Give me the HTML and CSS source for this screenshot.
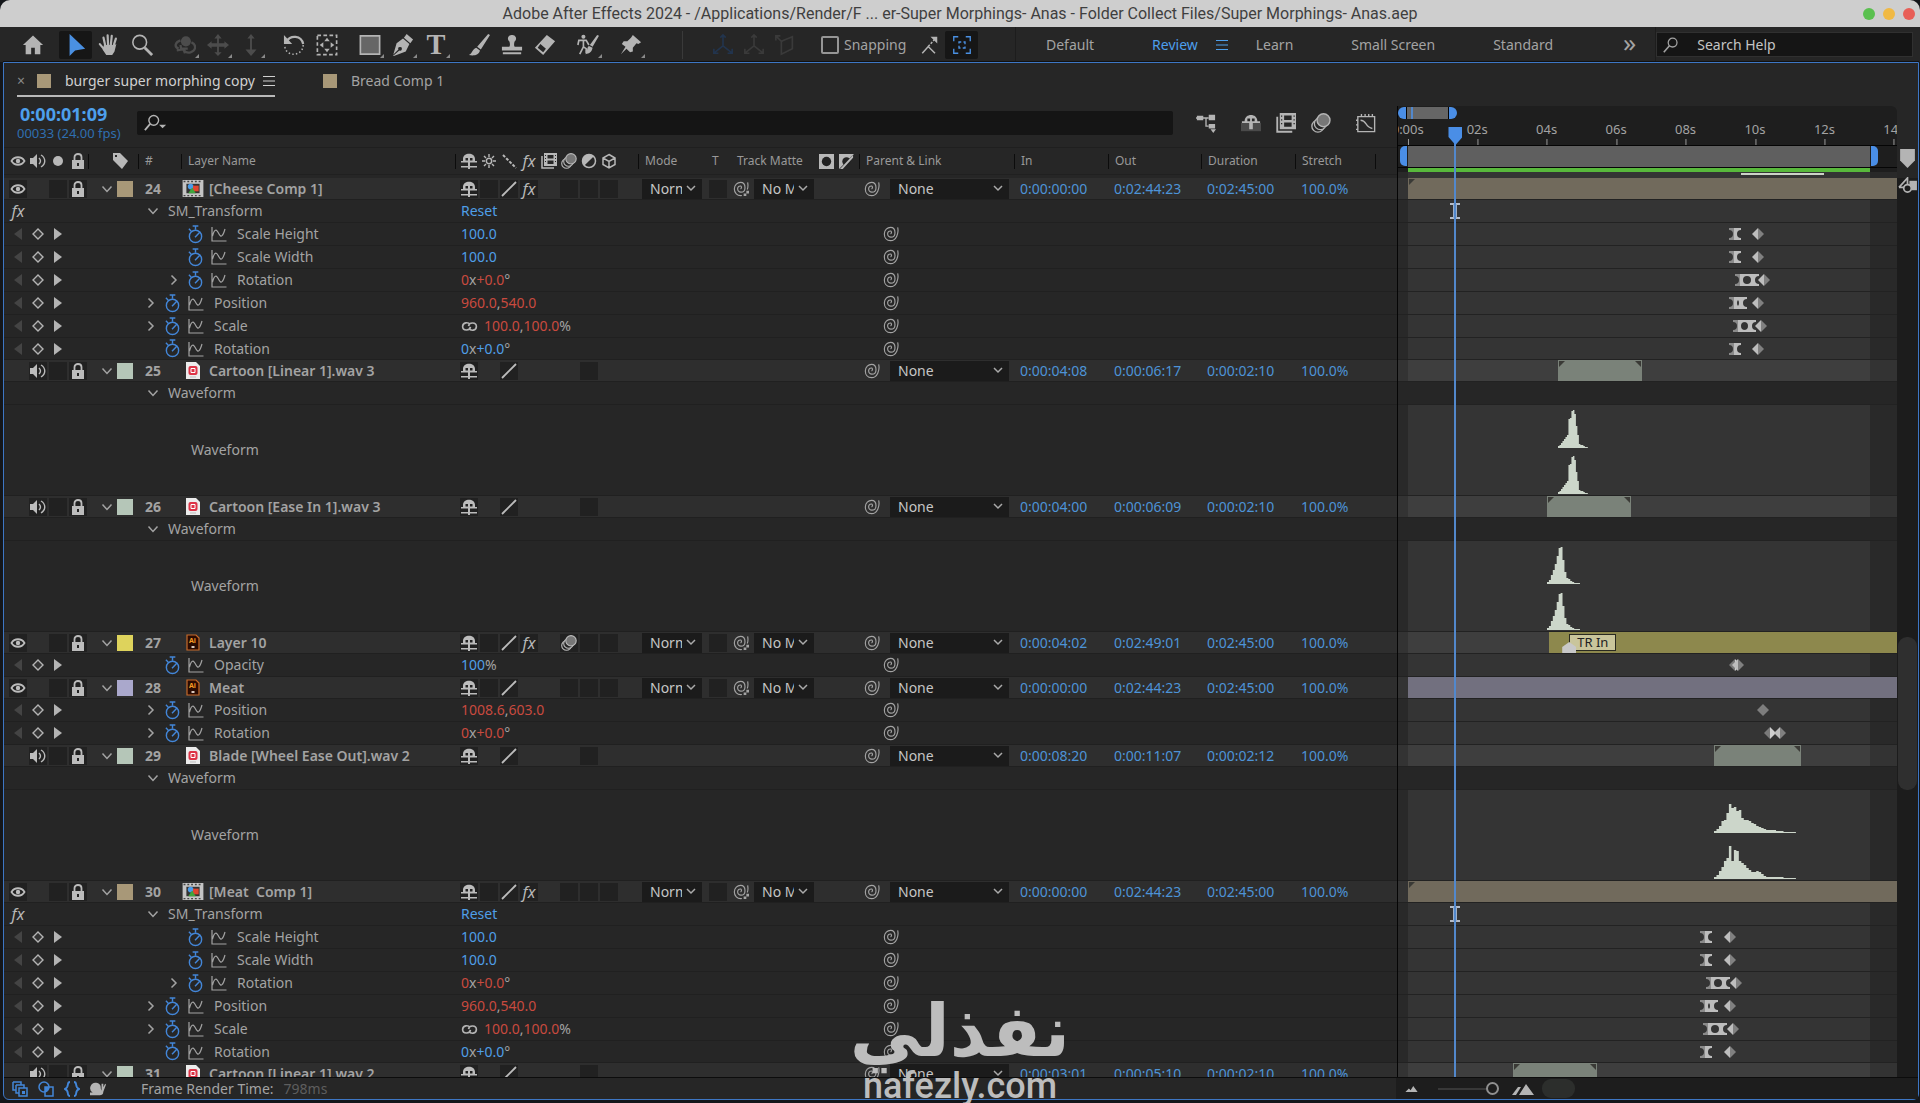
FILE: index.html
```html
<!DOCTYPE html>
<html lang="en">
<head>
  <meta charset="UTF-8">
  <title>Adobe After Effects 2024</title>
  <link rel="stylesheet" href="styles.css">
</head>
<body>
  <svg class="sprite" xmlns="http://www.w3.org/2000/svg">
    <symbol id="home" viewBox="0 0 24 24"><path fill="currentColor" d="M12 1.500L1 12h3v10h6v-7h4v7h6V12h3z"/></symbol>
    <symbol id="arrow" viewBox="0 0 24 24"><path fill="currentColor" d="M5 0v24l6-6 11-2z"/></symbol>
    <symbol id="hand" viewBox="0 0 24 24"><path fill="none" stroke="currentColor" stroke-width="2.400" stroke-linecap="round" d="M8 13L6 4M11 12l-.5-10.500M14 12l1-10M17 13l2.500-8M7 17l-5-6"/><path fill="currentColor" d="M6.500 12h11.500l2-1-2 8-2.500 4H9l-4-6z"/></symbol>
    <symbol id="zoom" viewBox="0 0 24 24"><circle cx="9.500" cy="9" r="7.500" fill="none" stroke="currentColor" stroke-width="1.700"/><path stroke="currentColor" stroke-width="3" d="M15 15l8 8"/></symbol>
    <symbol id="orbit" viewBox="0 0 24 24"><circle cx="13" cy="8" r="5.500" fill="currentColor"/><path fill="none" stroke="currentColor" stroke-width="2.500" d="M7 7c-6 2-7 7-2 9M19 9c6 3 5 9-1 11-4 1-7-1-7-3M3 18l5-1-1-5M15 16l-5 0 2 5"/></symbol>
    <symbol id="pan" viewBox="0 0 24 24"><path fill="currentColor" d="M12 0l4 5h-3v5h6V8l5 4-5 4v-2h-6v6h3l-4 4-4-4h3v-6H5v2l-5-4 5-4v2h6V5H8z"/></symbol>
    <symbol id="dolly" viewBox="0 0 24 24"><path fill="currentColor" d="M12 0l4 5h-3v12h5l-6 7-6-7h5V5H8z"/></symbol>
    <symbol id="rotate" viewBox="0 0 24 24"><path fill="none" stroke="currentColor" stroke-width="2.400" d="M4 8C8 1 20 1 22 11"/><path fill="currentColor" d="M1 1v10h9z"/><path fill="none" stroke="currentColor" stroke-width="1.600" stroke-dasharray="1.600 2.400" d="M22 12c0 12-18 14-20 2"/></symbol>
    <symbol id="anchor" viewBox="0 0 24 24"><path fill="none" stroke="currentColor" stroke-width="1.800" stroke-dasharray="4 2.600" d="M1.500 1.500h21v21h-21z"/><path fill="currentColor" d="M12 4l3 4H9zM12 20l-3-4h6zM4 12l4-3v6zM20 12l-4 3V9z"/></symbol>
    <symbol id="rect" viewBox="0 0 24 24"><path fill="#666" stroke="currentColor" stroke-width="1.800" d="M1.500 2h21v20h-21z"/></symbol>
    <symbol id="pen" viewBox="0 0 24 24"><path fill="currentColor" fill-rule="evenodd" d="M16 0l7 6-3 4-7-6zM12 5l7 6-4 8-13 5-1-1 6-6a2 2 0 1 1 1 1l-7 6 4-14z"/></symbol>
    <symbol id="type" viewBox="0 0 24 24"><text x="12" y="22" text-anchor="middle" font-family="Liberation Serif" font-weight="700" font-size="31" fill="currentColor">T</text></symbol>
    <symbol id="brush" viewBox="0 0 24 24"><path fill="currentColor" d="M22 0l2 1-10 16-4-3zM9 15l4 3c-1 5-6 6-12 5 4-2 3-6 8-8z"/></symbol>
    <symbol id="stamp" viewBox="0 0 24 24"><path fill="currentColor" d="M12 1a4 4 0 0 1 3 7c-1 2-1 5 0 6h8v4H1v-4h8c1-1 1-4 0-6a4 4 0 0 1 3-7zM2 20h20v2H2z"/></symbol>
    <symbol id="eraser" viewBox="0 0 24 24"><path fill="currentColor" d="M14 1l9 7-13 15-9-8zM4 15l6 5 3-4-6-5z" fill-rule="evenodd"/></symbol>
    <symbol id="roto" viewBox="0 0 24 24"><circle cx="7" cy="3" r="2.200" fill="currentColor"/><path fill="none" stroke="currentColor" stroke-width="1.800" d="M1 12l1-5h8l3 5M7 6v8l-4 8M7 14l3 2v5"/><path fill="currentColor" d="M22 1l2 1-7 12-3-2zM13 13l4 2c-1 5-3 6-8 7 3-3 1-7 4-9z"/></symbol>
    <symbol id="pin" viewBox="0 0 24 24"><path fill="currentColor" d="M14 1l9 8-3 2-2-1-4 5v4l-3 1-4-4-6 6 5-8-4-3 2-3h4l4-4z"/></symbol>
    <symbol id="axis" viewBox="0 0 24 24"><path fill="none" stroke="currentColor" stroke-width="1.800" d="M12 2v11l-9 7M12 13l9 7M9 4l3-3 3 3M2 16v5h5M22 16v5h-5"/></symbol>
    <symbol id="plane" viewBox="0 0 24 24"><path fill="none" stroke="currentColor" stroke-width="1.800" d="M8 8l12-5v13L8 22zM2 2l7 7M2 7V2h5"/></symbol>
    <symbol id="snap" viewBox="0 0 24 24"><path fill="none" stroke="currentColor" stroke-width="2" d="M3 23l8-9 9 9"/><path stroke="currentColor" stroke-width="2" stroke-dasharray="3 2" d="M11 14l8-9"/><path fill="currentColor" d="M14 1h9v9z"/></symbol>
    <symbol id="bounds" viewBox="0 0 24 24"><path fill="none" stroke="currentColor" stroke-width="1.800" d="M1 7V1h6M17 1h6v6M23 17v6h-6M7 23H1v-6M8 10V8h3M14 8h2v3M16 14v2h-3M10 16H8v-3"/></symbol>
    <symbol id="menu" viewBox="0 0 12 12"><path stroke="currentColor" stroke-width="1.200" d="M0 1.500h12M0 6h12M0 10.500h12"/></symbol>
    <symbol id="search" viewBox="0 0 20 20"><circle cx="12" cy="7" r="5.500" fill="none" stroke="currentColor" stroke-width="1.600"/><path stroke="currentColor" stroke-width="2" d="M8 11l-7 8"/></symbol>
    <symbol id="searchdrop" viewBox="0 0 26 20"><circle cx="11" cy="7" r="5.500" fill="none" stroke="currentColor" stroke-width="1.600"/><path stroke="currentColor" stroke-width="2" d="M7 11l-6 7"/><path fill="currentColor" d="M17 12h8l-4 4z"/></symbol>
    <symbol id="eye" viewBox="0 0 16 16"><path fill="none" stroke="currentColor" stroke-width="1.800" d="M1.500 8c3-5 10-5 13 0-3 5-10 5-13 0z"/><circle cx="8" cy="8" r="2.200" fill="currentColor"/></symbol>
    <symbol id="speaker" viewBox="0 0 16 16"><path fill="currentColor" d="M0 5h3l4-4v14l-4-4H0z"/><path fill="none" stroke="currentColor" stroke-width="1.400" d="M9 5c2 2 2 4 0 6M11 2c5 3 5 9 0 12"/></symbol>
    <symbol id="dot" viewBox="0 0 16 16"><circle cx="8" cy="8" r="5" fill="currentColor"/></symbol>
    <symbol id="lock" viewBox="0 0 16 16"><path fill="currentColor" fill-rule="evenodd" d="M2 7h12v9H2zM7 10h2v3H7z"/><path fill="none" stroke="currentColor" stroke-width="1.800" d="M4.500 7V4c0-4 7-4 7 0v3"/></symbol>
    <symbol id="tag" viewBox="0 0 16 16"><path fill="currentColor" fill-rule="evenodd" d="M1 0h7l8 8-6 8-9-9zM3 2v2h2V2z"/></symbol>
    <symbol id="shy" viewBox="0 0 16 16"><path fill="currentColor" fill-rule="evenodd" d="M2 8V6c0-7 12-7 12 0v2h2v1.500H9V13h7v1.500H9V16H7v-1.500H0V13h7V9.500H0V8zM4.500 5v2.500H7V5zM9 5v2.500h2.500V5z"/></symbol>
    <symbol id="sun" viewBox="0 0 16 16"><circle cx="8" cy="8" r="2.700" fill="none" stroke="currentColor" stroke-width="1.500"/><path stroke="currentColor" stroke-width="1.400" d="M8 1v3M8 12v3M1 8h3M12 8h3M3 3l2 2M11 11l2 2M13 3l-2 2M5 11l-2 2"/></symbol>
    <symbol id="qualdots" viewBox="0 0 16 16"><path stroke="currentColor" stroke-width="2" stroke-dasharray="3 1.500" d="M2 2l13 13"/></symbol>
    <symbol id="slash" viewBox="0 0 16 16"><path stroke="currentColor" stroke-width="1.800" d="M1 15L15 1"/></symbol>
    <symbol id="film" viewBox="0 0 16 16"><path fill="none" stroke="currentColor" stroke-width="1.500" d="M1 3v12h12"/><path fill="currentColor" fill-rule="evenodd" d="M3 0h13v13H3zM6.500 2v3.500h6V2zM6.500 7.500V11h6V7.500zM4 2v1h1V2zM4 5v1h1V5zM4 8v1h1V8zM14 2v1h1V2zM14 5v1h1V5zM14 8v1h1V8z"/></symbol>
    <symbol id="blur" viewBox="0 0 16 16"><g stroke="currentColor" stroke-width="1.100"><circle cx="5.500" cy="10.500" r="4.800" fill="none"/><circle cx="7.500" cy="8.500" r="4.800" fill="#262626"/><circle cx="10" cy="5.800" r="5.200" fill="#777"/></g></symbol>
    <symbol id="adjust" viewBox="0 0 16 16"><circle cx="8" cy="8" r="6.500" fill="none" stroke="currentColor" stroke-width="1.500"/><path fill="currentColor" d="M12.600 3.400A6.500 6.500 0 0 0 3.400 12.600z"/></symbol>
    <symbol id="cube" viewBox="0 0 16 16"><path fill="none" stroke="currentColor" stroke-width="1.500" d="M8 1.500l6 3.500v6.500L8 15l-6-3.500V5zM2 5l6 3.500L14 5M8 8.500V15"/></symbol>
    <symbol id="matte" viewBox="0 0 16 16"><path fill="currentColor" d="M0 0h16v16H0z"/><circle cx="8" cy="8" r="5" fill="#222"/></symbol>
    <symbol id="invert" viewBox="0 0 16 16"><path fill="currentColor" d="M0 0h16L0 16z"/><circle cx="8" cy="8" r="4.500" fill="#222"/><path fill="currentColor" d="M15 1v3L4 16H1z"/></symbol>
    <symbol id="whip" viewBox="0 0 18 18"><path fill="none" stroke="currentColor" stroke-width="1.300" d="M16.500 1.500C18 8 15 16.500 8.500 16.500 4 16.500 1.500 13 1.500 9 1.500 4.500 5 1.500 8.500 1.500c3.500 0 5 3 5 6s-2 5-4.500 5-3.800-2-3.800-3.700C5.200 6.500 7 5.200 9 5.800c1 .7.5 2.700-.5 3.200"/></symbol>
    <symbol id="whipdots" viewBox="0 0 18 18"><path fill="none" stroke="currentColor" stroke-width="1.300" d="M16.500 1.500c.5 3 .5 6-.5 8M10 16.300C4.500 17 1.500 13 1.500 9 1.500 4.500 5 1.500 8.500 1.500c3.500 0 5 3 5 6s-2 5-4.500 5-3.800-2-3.800-3.700C5.200 6.500 7 5.200 9 5.800c1 .7.5 2.700-.5 3.200"/><path fill="currentColor" d="M15 11h3v3h-3zM12 14h3v3h-3z"/></symbol>
    <symbol id="down" viewBox="0 0 12 12"><path fill="none" stroke="currentColor" stroke-width="1.500" d="M1.500 3.500L6 8.500l4.500-5"/></symbol>
    <symbol id="right" viewBox="0 0 12 12"><path fill="none" stroke="currentColor" stroke-width="1.500" d="M3.500 1.500L8 6l-4.500 4.500"/></symbol>
    <symbol id="prev" viewBox="0 0 12 12"><path fill="#444" d="M10 0v12L2 6z"/></symbol>
    <symbol id="next" viewBox="0 0 12 12"><path fill="currentColor" d="M2 0v12l8-6z"/></symbol>
    <symbol id="keybox" viewBox="0 0 12 12"><path fill="#333" stroke="currentColor" stroke-width="1.400" d="M6 1l5 5-5 5-5-5z"/></symbol>
    <symbol id="watch" viewBox="0 0 18 20"><circle cx="9" cy="12" r="6.500" fill="none" stroke="currentColor" stroke-width="1.500"/><path fill="none" stroke="currentColor" stroke-width="1.500" d="M6 1h6M9 1v4M2 4l3 3M8.500 13L14 7"/></symbol>
    <symbol id="graph" viewBox="0 0 16 16"><path fill="none" stroke="currentColor" stroke-width="1.200" d="M1 1v14h14.500M1.500 10C4 1 6 4 8 8s4 2 6-5"/></symbol>
    <symbol id="chain" viewBox="0 0 18 12"><path fill="none" stroke="currentColor" stroke-width="1.800" d="M10 6.500C9.500 11 1.500 11 1.500 6S8 1 9.500 4M8 5.500C8.500 1 16.500 1 16.500 6S10 11 8.500 8"/></symbol>
    <symbol id="comp" viewBox="0 0 22 18"><path fill="#c4c4c4" d="M0 0h22v18H0z"/><path fill="#333" d="M4 4h14v10H4z"/><path stroke="#444" stroke-width="1.500" stroke-dasharray="2 2" d="M1 1.500h20M1 16.500h20"/><circle cx="8.500" cy="7" r="3" fill="#4a9be8"/><path fill="#e0452f" d="M11 6h6v6h-6z"/><path fill="#3fa53c" d="M10 8l4 6H6z"/></symbol>
    <symbol id="wav" viewBox="0 0 14 17"><path fill="#ececec" d="M0 0h10l4 4v13H0z"/><rect x="2.500" y="4" width="9" height="9" rx="2" fill="#dd3346"/><path fill="none" stroke="#fff" d="M5 10.500V6.500h4v4z"/><path stroke="#bbb" d="M4 15h6"/></symbol>
    <symbol id="ai" viewBox="0 0 14 17"><path fill="#2b0b02" stroke="#c76a2a" stroke-width="1.200" d="M1 1h9l3 3v12H1z"/><text x="3" y="9" font-family="Noto Sans" font-weight="700" font-size="7" fill="#f59a23">Ai</text><path fill="#d8c8bc" d="M5.500 12h3v2h-3z"/></symbol>
    <symbol id="flow" viewBox="0 0 22 22"><path fill="currentColor" d="M1 3h7v5H1zM14 2h7v6h-7zM14 12h7v5h-7zM16 18h6l-3 4z"/><path fill="none" stroke="currentColor" stroke-width="1.500" d="M0 5.500h14M11 5.500v9h3"/></symbol>
    <symbol id="shybig" viewBox="0 0 22 22"><path fill="#4a4a4a" d="M0 11h22v9H0z"/><path fill="currentColor" d="M4 9c0-9 14-9 14 0h3v2h-8v7H9v-7H1V9zM7 6v3h3V6zM12 6v3h3V6z" fill-rule="evenodd"/></symbol>
    <symbol id="grapheditor" viewBox="0 0 22 22"><path fill="none" stroke="currentColor" stroke-width="1.500" d="M2 4h18.500v16.500H2zM5 8c7 0 5 8 13 9M6 4V1M10 4V1M14 4V1M18 4V1M2 8H0M2 13H0M2 18H0"/></symbol>
    <symbol id="marker" viewBox="0 0 14 18"><path fill="currentColor" d="M0 0h14v11l-7 7-7-7z"/></symbol>
    <symbol id="compbutton" viewBox="0 0 20 18"><path fill="currentColor" d="M9 4h11v10H9z"/><path fill="none" stroke="#1d1d1d" stroke-width="4" d="M1 11l9-9v7"/><path fill="none" stroke="currentColor" stroke-width="1.800" d="M1 11l9-10v8M1 11h6"/><circle cx="10" cy="12" r="4" fill="#1d1d1d" stroke="currentColor" stroke-width="1.800"/></symbol>
    <symbol id="kdiamond" viewBox="0 0 12 12"><path fill="#bdbdbd" d="M6 0v12L0 6z"/><path fill="#808080" d="M6 0l6 6-6 6z"/></symbol>
    <symbol id="kdiamondr" viewBox="0 0 12 12"><path fill="#7a7a7a" d="M6 0v12L0 6z"/><path fill="#cfcfcf" d="M6 0l6 6-6 6z"/></symbol>
    <symbol id="kflat" viewBox="0 0 12 12"><path fill="#7d7d7d" d="M6 0l6 6-6 6-6-6z"/></symbol>
    <symbol id="kease" viewBox="0 0 12 12"><path fill="#8a8a8a" d="M0 0h6v12H0v-2a4 4 0 0 0 0-8z"/><path fill="#bdbdbd" d="M5 0h7v2a4 4 0 0 0 0 8v2H5z"/></symbol>
    <symbol id="keasel" viewBox="0 0 12 12"><path fill="#bdbdbd" d="M0 0h12v2a4 4 0 0 0 0 8v2H0v-2a4 4 0 0 0 0-8z"/></symbol>
    <symbol id="ibeam" viewBox="0 0 10 16"><path fill="none" stroke="#b4bcc8" stroke-width="1.800" d="M0 1h10M0 15h10"/><path stroke="#9fb0c8" stroke-width="4" d="M5 1v14"/></symbol>
    <symbol id="switches" viewBox="0 0 16 16"><path fill="none" stroke="currentColor" stroke-width="1.500" d="M1 1h8v3M1 1v8h3M4 4h8v3M4 4v8h3M7 7h8v8H7z"/><path fill="currentColor" d="M10 10h3v3h-3z"/></symbol>
    <symbol id="modes" viewBox="0 0 16 16"><circle cx="6" cy="6" r="5" fill="none" stroke="currentColor" stroke-width="1.500"/><path fill="none" stroke="currentColor" stroke-width="1.500" d="M7 6h8v9H7z"/><path fill="currentColor" d="M7 6h4c0 3-2 5-4 5z"/></symbol>
    <symbol id="braces" viewBox="0 0 16 16"><path fill="none" stroke="currentColor" stroke-width="1.900" d="M6 1C2 1 6 6 1 8c5 2 1 7 5 7M10 1c4 0 0 5 5 7-5 2-1 7-5 7"/></symbol>
    <symbol id="snail" viewBox="0 0 18 16"><path fill="currentColor" d="M7 1a5 5 0 0 1 5 6l1 3V2h2v4l2-4 1 1-3 8c0 3-2 4-4 4H0v-3h3A6 6 0 0 1 7 1z"/></symbol>
    <symbol id="hill" viewBox="0 0 14 8"><path fill="currentColor" d="M0 8l4-4 2 2 3-5 5 7z"/></symbol>
    <symbol id="hills" viewBox="0 0 22 12"><path fill="currentColor" d="M7 12l7-11 8 11zM0 12l6-8h3l-5 8z"/></symbol>
  </svg>

  <div class="titlebar">
    <h1>Adobe After Effects 2024 - /Applications/Render/F ... er-Super Morphings- Anas - Folder Collect Files/Super Morphings- Anas.aep</h1>
    <div class="lights">
      <button class="light green" aria-label="Zoom window"></button>
      <button class="light yellow" aria-label="Minimize"></button>
      <button class="light red" aria-label="Close"></button>
    </div>
  </div>

  <div class="toolbar">
    <div class="tools" id="tools"></div>
    <div class="axes" id="axes"></div>
    <label class="snapping"><input type="checkbox"> Snapping</label>
    <div class="snap-tools">
      <button class="tool" aria-label="Snap edges"><svg><use href="#snap"/></svg></button>
      <button class="tool active" aria-label="Snap bounds"><svg><use href="#bounds"/></svg></button>
    </div>
    <div class="workspaces">
      <button>Default</button>
      <button class="current">Review <svg><use href="#menu"/></svg></button>
      <button class="after-menu">Learn</button>
      <button>Small Screen</button>
      <button>Standard</button>
      <button class="more" aria-label="More workspaces">»</button>
    </div>
    <label class="help"><svg><use href="#search"/></svg><input type="text" placeholder="Search Help"></label>
  </div>

  <main class="panel">
    <div class="tabs">
      <button class="tab active"><span class="x">×</span><span class="chip"></span>burger super morphing copy<svg><use href="#menu"/></svg></button>
      <button class="tab"><span class="chip"></span>Bread Comp 1</button>
    </div>

    <div class="work">
      <section class="outline">
        <div class="controls">
          <div class="time"><strong>0:00:01:09</strong><span>00033 (24.00 fps)</span></div>
          <label class="filter"><svg><use href="#searchdrop"/></svg><input type="text" aria-label="Filter layers"></label>
          <div class="comp-switches">
            <button aria-label="Mini-flowchart"><svg><use href="#flow"/></svg></button>
            <button aria-label="Hide shy layers"><svg><use href="#shybig"/></svg></button>
            <button aria-label="Frame blending"><svg><use href="#film"/></svg></button>
            <button aria-label="Motion blur"><svg><use href="#blur"/></svg></button>
            <button aria-label="Graph editor"><svg><use href="#grapheditor"/></svg></button>
          </div>
        </div>
        <table class="layers">
          <thead>
            <tr class="row head">
              <th><svg><use href="#eye"/></svg></th>
              <th><svg><use href="#speaker"/></svg></th>
              <th><svg><use href="#dot"/></svg></th>
              <th><svg><use href="#lock"/></svg></th>
              <th class="sep tagcell"><svg><use href="#tag"/></svg></th>
              <th class="sep">#</th>
              <th class="sep">Layer Name</th>
              <th class="sep switches" id="head-switches"></th>
              <th class="sep">Mode</th>
              <th class="tcell">T</th>
              <th class="mattecell">Track Matte <svg><use href="#matte"/></svg><svg><use href="#invert"/></svg></th>
              <th class="sep">Parent &amp; Link</th>
              <th class="sep">In</th>
              <th class="sep">Out</th>
              <th class="sep">Duration</th>
              <th class="sep">Stretch</th>
              <th class="sep"></th>
            </tr>
          </thead>
          <tbody id="rows"></tbody>
        </table>
      </section>

      <section class="timeline" id="timeline">
        <div class="navigator"><div class="nav-range"></div></div>
        <div class="ruler" id="ruler"></div>
        <div class="workarea"><div class="work-range" id="work-range"></div></div>
        <div class="cache"><div class="cached" id="cached"></div></div>
        <div class="lanes" id="lanes"></div>
      </section>

      <div class="side">
        <svg class="side-marker"><use href="#marker"/></svg>
        <svg class="side-comp"><use href="#compbutton"/></svg>
        <div class="scroll-thumb"></div>
      </div>
    </div>

    <footer class="status">
      <div class="toggles">
        <button aria-label="Layer switches"><svg><use href="#switches"/></svg></button>
        <button aria-label="Transfer controls"><svg><use href="#modes"/></svg></button>
        <button aria-label="In and out points"><svg><use href="#braces"/></svg></button>
        <button class="snail" aria-label="Render time"><svg><use href="#snail"/></svg></button>
      </div>
      <span>Frame Render Time:</span><span class="ms">798ms</span>
      <div class="zoombar">
        <svg class="hill"><use href="#hill"/></svg>
        <input type="range" min="0" max="100" value="100" aria-label="Timeline zoom">
        <svg class="hills"><use href="#hills"/></svg>
        <div class="hscroll"></div>
      </div>
    </footer>
  </main>

  <div class="watermark"><span lang="ar" dir="rtl">نفذلي</span><span>nafezly.com</span></div>

  <script>
    const icon = (name, cls = '') => `<svg class="${cls}"><use href="#${name}"/></svg>`;

    // timeline scale: the visible part of the ruler, in seconds
    const START = -0.28;
    const SPAN = 14.37;
    const COMP_END = 13.3;
    const pct = t => ((t - START) / SPAN * 100).toFixed(2) + '%';
    const len = t => (t / SPAN * 100).toFixed(2) + '%';

    const toolGroups = [
      ['home'], ['arrow', 'hand', 'zoom'], ['orbit', 'pan', 'dolly'], ['rotate', 'anchor'],
      ['rect', 'pen', 'type'], ['brush', 'stamp', 'eraser'], ['roto'], ['pin']
    ];
    const dim = ['orbit', 'pan', 'dolly'];
    const flyout = ['orbit', 'pan', 'dolly', 'rect', 'pen', 'type', 'roto', 'pin'];
    document.getElementById('tools').innerHTML = toolGroups.map(group => '<div class="group">' + group.map(t => {
      const cls = ['tool', t === 'arrow' ? 'active' : '', dim.includes(t) ? 'dim' : '', flyout.includes(t) ? 'flyout' : ''].join(' ');
      return `<button class="${cls}" aria-label="${t}">${icon(t)}</button>`;
    }).join('') + '</div>').join('');
    document.getElementById('axes').innerHTML = ['axis', 'axis', 'plane'].map((a, i) =>
      `<button class="tool dimmer ${i === 0 ? 'blue' : ''}" aria-label="axis mode">${icon(a)}</button>`).join('');

    const fx = '<i class="fx">fx</i>';
    document.getElementById('head-switches').innerHTML =
      ['shy', 'sun', 'qualdots', 'fx', 'film', 'blur', 'adjust', 'cube'].map(s =>
        `<span>${s === 'fx' ? fx : icon(s)}</span>`).join('');

    // keyframes are [shape, seconds]
    const e = t => ['kease', t], l = t => ['keasel', t], d = t => ['kdiamond', t];
    const smProps = (off, k) => [
      { name: 'Scale Height', deep: true, val: '<b>100.0</b>', keys: [e(k), d(off)] },
      { name: 'Scale Width', deep: true, val: '<b>100.0</b>', keys: [e(k), d(off)] },
      { name: 'Rotation', deep: true, twirl: true, val: '<em>0</em>x<em>+0.0</em>°', keys: [e(k + 0.17), l(k + 0.51), d(off + 0.18)] },
      { name: 'Position', twirl: true, val: '<em>960.0</em>,<em>540.0</em>', keys: [e(k), l(k + 0.17), d(off)] },
      { name: 'Scale', twirl: true, chain: true, val: '<em>100.0</em>,<em>100.0</em>%', keys: [e(k + 0.1), l(k + 0.43), d(off + 0.1)] },
      { name: 'Rotation', tight: true, val: '<b>0</b>x<b>+0.0</b>°', keys: [e(k), d(off)] }
    ];

    const cartoonA = [2, 3, 5, 7, 9, 11, 13, 29, 30, 37, 38, 34, 22, 13, 4, 3, 3, 2, 1, 1];
    const easeIn = [2, 4, 9, 14, 20, 28, 36, 37, 24, 12, 6, 5, 3, 2, 1, 1, 1];
    const blade1 = [2, 4, 7, 12, 13, 20, 29, 25, 26, 22, 23, 15, 13, 13, 12, 10, 9, 7, 6, 5, 4, 3, 3, 3, 3, 2, 2, 2, 1, 1, 1, 1, 1];
    const blade2 = [2, 4, 8, 12, 18, 21, 33, 18, 29, 28, 18, 16, 14, 11, 9, 7, 7, 8, 7, 5, 3, 2, 2, 2, 2, 2, 2, 2, 1, 1, 1, 1, 1];

    const layers = [
      { n: 24, name: '[Cheese Comp 1]', type: 'comp', color: 'tan', mode: true, in: '0:00:00:00', out: '0:02:44:23', dur: '0:02:45:00', at: 0, size: 20, effect: true, props: smProps(10.08, 9.43) },
      { n: 25, name: 'Cartoon [Linear 1].wav 3', type: 'wav', color: 'mint', in: '0:00:04:08', out: '0:00:06:17', dur: '0:00:02:10', at: 4.333, size: 2.417, wave: [0.86, cartoonA, cartoonA] },
      { n: 26, name: 'Cartoon [Ease In 1].wav 3', type: 'wav', color: 'mint', in: '0:00:04:00', out: '0:00:06:09', dur: '0:00:02:10', at: 4, size: 2.417, wave: [0.95, easeIn, easeIn] },
      { n: 27, name: 'Layer 10', type: 'ai', color: 'yellow', mode: true, blur: true, in: '0:00:04:02', out: '0:02:49:01', dur: '0:02:45:00', at: 4.083, size: 20, marker: 'TR In',
        props: [{ name: 'Opacity', val: '<b>100</b>%', keys: [['kdiamondr', 9.43], d(9.52)] }] },
      { n: 28, name: 'Meat', type: 'ai', color: 'lilac', mode: true, in: '0:00:00:00', out: '0:02:44:23', dur: '0:02:45:00', at: 0, size: 20,
        props: [
          { name: 'Position', twirl: true, val: '<em>1008.6</em>,<em>603.0</em>', keys: [['kflat', 10.24]] },
          { name: 'Rotation', twirl: true, val: '<em>0</em>x<em>+0.0</em>°', keys: [['kdiamondr', 10.43], d(10.71)] }
        ] },
      { n: 29, name: 'Blade [Wheel Ease Out].wav 2', type: 'wav', color: 'mint', in: '0:00:08:20', out: '0:00:11:07', dur: '0:00:02:12', at: 8.833, size: 2.5, wave: [2.36, blade1, blade2] },
      { n: 30, name: '[Meat&nbsp; Comp 1]', type: 'comp', color: 'tan', mode: true, in: '0:00:00:00', out: '0:02:44:23', dur: '0:02:45:00', at: 0, size: 20, effect: true, props: smProps(9.28, 8.59) },
      { n: 31, name: 'Cartoon [Linear 1].wav 2', type: 'wav', color: 'mint', in: '0:00:03:01', out: '0:00:05:10', dur: '0:00:02:10', at: 3.042, size: 2.417 }
    ];

    function switchCells(layer) {
      const box = '<span class="box"></span>', none = '<span></span>';
      const cell = c => `<span class="box">${c}</span>`;
      if (layer.type === 'wav') return cell(icon('shy')) + none + cell(icon('slash')) + none + none + none + box + none;
      const hasFx = layer.n !== 28;
      return cell(icon('shy')) + box + cell(icon('slash')) + (hasFx ? cell(fx) : none) + none +
        (layer.blur ? cell(icon('blur')) : box) + box + box;
    }

    function layerRow(layer) {
      const audio = layer.type === 'wav';
      return `<tr class="row layer">
        <td>${audio ? '' : `<span class="box">${icon('eye')}</span>`}</td>
        <td>${audio ? `<span class="box">${icon('speaker')}</span>` : ''}</td>
        <td><span class="box"></span></td>
        <td><span class="box">${icon('lock')}</span></td>
        <td class="label">${icon('down', 'twirl')}<span class="swatch ${layer.color}"></span></td>
        <td class="num">${layer.n}</td>
        <td class="name">${icon(layer.type, layer.type)}<span>${layer.name}</span></td>
        <td class="switches">${switchCells(layer)}</td>
        <td>${layer.mode ? `<select class="short" aria-label="Mode of layer ${layer.n}"><option>Normal</option></select>` : ''}</td>
        <td>${layer.mode ? '<span class="box"></span>' : ''}</td>
        <td class="matte">${layer.mode ? icon('whipdots', 'whip') + `<select class="short" aria-label="Track matte of layer ${layer.n}"><option>No Matte</option></select>` : ''}</td>
        <td class="parent">${icon('whip', 'whip')}<select aria-label="Parent of layer ${layer.n}"><option>None</option></select></td>
        <td class="val">${layer.in}</td><td class="val">${layer.out}</td><td class="val">${layer.dur}</td><td class="val">100.0%</td><td></td>
      </tr>`;
    }

    function propRow(p) {
      return `<tr class="row prop ${p.tight ? 'tight' : ''}">
        <td>${icon('prev')}</td><td>${icon('keybox')}</td><td>${icon('next')}</td>
        <td class="pname ${p.deep ? 'deep' : ''}"><span class="twirlbox">${p.twirl ? icon('right', 'twirl') : ''}</span>${icon('watch', 'watch')}${icon('graph', 'graph')}<span>${p.name}</span></td>
        <td class="pval">${p.chain ? icon('chain', 'chain') : ''}<span>${p.val}</span></td>
        <td class="pwhip">${icon('whip', 'whip')}</td>
      </tr>`;
    }

    // stepped silhouette, one step per sample
    function wave(samples) {
      let path = 'M0 40';
      samples.forEach((h, i) => { path += `V${40 - h}H${i + 1}`; });
      return `<svg viewBox="0 0 ${samples.length} 40" preserveAspectRatio="none"><path d="${path}V40z"/></svg>`;
    }

    let rows = '', lanes = `<div class="comp-range" style="left:${pct(0)};width:${len(COMP_END)}"></div>`;
    lanes += `<div class="leftover" style="left:${pct(9.6)};width:${len(2.4)}"></div>`;
    layers.forEach(layer => {
      rows += layerRow(layer);
      const short = layer.type === 'wav' ? 'ends' : '';
      const plain = layer.type === 'ai' ? '' : 'fold';
      lanes += `<div class="lane layer-lane"><div class="bar ${layer.color} ${short} ${plain}" style="left:${pct(layer.at)};width:${len(layer.size)}"></div>`;
      if (layer.marker) lanes += `<div class="layer-marker" style="left:${pct(4.65)}"><span>${layer.marker}</span></div>`;
      lanes += '</div>';
      if (layer.effect) {
        rows += `<tr class="row effect"><td>${fx}</td><td class="ename">${icon('down', 'twirl')}<span>SM_Transform</span></td><td class="pval"><button>Reset</button></td></tr>`;
        lanes += `<div class="lane"><svg class="ibeam" style="left:${pct(1.375)}"><use href="#ibeam"/></svg></div>`;
      }
      (layer.props || []).forEach(p => {
        rows += propRow(p);
        lanes += `<div class="lane ${p.tight ? 'tight' : ''}">` + p.keys.map(k => `<svg class="key" style="left:${pct(k[1])}"><use href="#${k[0]}"/></svg>`).join('') + '</div>';
      });
      if (layer.wave) {
        rows += `<tr class="row effect"><td></td><td class="ename">${icon('down', 'twirl')}<span>Waveform</span></td></tr>`;
        rows += '<tr class="row wavebody"><td>Waveform</td></tr>';
        lanes += '<div class="lane closed"></div>';
        lanes += `<div class="lane wave-lane"><div class="wave" style="left:${pct(layer.at)};width:${len(layer.wave[0])}">${wave(layer.wave[1])}${wave(layer.wave[2])}</div></div>`;
      }
    });
    document.getElementById('rows').innerHTML = rows;
    document.getElementById('lanes').innerHTML = lanes;

    let ticks = '';
    for (let s = 0; s <= 14; s += 2) {
      const text = s === 0 ? '0:00s' : String(s).padStart(2, '0') + 's';
      ticks += `<div class="tick" style="left:${pct(s)}">${text}</div>`;
    }
    document.getElementById('ruler').innerHTML = ticks;
    ['work-range', 'cached'].forEach(id => {
      const el = document.getElementById(id);
      el.style.left = pct(0);
      el.style.width = len(COMP_END);
    });
    document.getElementById('timeline').insertAdjacentHTML('beforeend', `<div class="playhead" style="left:${pct(1.375)}"></div>`);
  </script>
</body>
</html>
```
FILE: styles.css
```css
* {
  box-sizing: border-box;
}

body {
  margin: 0;
  height: 100vh;
  display: flex;
  flex-direction: column;
  overflow: hidden;
  background: #14161a;
  color: #a3a3a3;
  font-family: "Noto Sans", "Open Sans", sans-serif;
  font-size: 14px;
  line-height: 20px;
}

.sprite {
  display: none;
}

svg {
  display: block;
  width: 16px;
  height: 16px;
  flex: none;
}

button,
input,
select {
  font: inherit;
  color: inherit;
  background: none;
  border: 0;
  padding: 0;
  margin: 0;
  border-radius: 0;
  outline: 0;
}

/* title bar */
.titlebar {
  position: relative;
  flex: none;
  height: 27px;
  display: flex;
  align-items: center;
  justify-content: center;
  background: #cecece;
  border-radius: 10px 10px 0 0;
}

.titlebar h1 {
  margin: 0;
  color: #3f3f3f;
  font-family: Roboto, "Liberation Sans", sans-serif;
  font-size: 16px;
  font-weight: 400;
}

.lights {
  position: absolute;
  right: 5px;
  top: 8px;
  display: flex;
  gap: 8px;
}

.light {
  width: 12px;
  height: 12px;
  border-radius: 50%;
}

.green { background: #5ac04f; }
.light.yellow { background: #f0b944; }
.red { background: #e85f57; }

/* toolbar */
.toolbar {
  flex: none;
  height: 35px;
  display: flex;
  align-items: center;
  background: #262626;
  padding: 0 7px 0 16px;
}

.tools {
  display: flex;
  gap: 10px;
  padding-right: 35px;
  border-right: 1px solid #3a3a3a;
}

.group,
.axes,
.snap-tools {
  display: flex;
}

.tool {
  position: relative;
  width: 33px;
  height: 28px;
  display: flex;
  align-items: center;
  justify-content: center;
  color: #b4b4b4;
}

.tool svg {
  width: 22px;
  height: 22px;
}

.tool.active {
  background: #161616;
  color: #4a90e2;
  border-radius: 2px;
}

.snap-tools .tool svg {
  width: 18px;
  height: 18px;
}

.tool.dim { color: #4c4c4c; }
.tool.dimmer { color: #3a3a3a; width: 31px; }
.tool.dimmer.blue { color: #22344d; }

.flyout::after {
  content: "";
  position: absolute;
  right: 2px;
  bottom: 1px;
  border: 2px solid transparent;
  border-right-color: #8a8a8a;
  border-bottom-color: #8a8a8a;
}

.axes {
  margin-left: 24px;
  margin-right: 21px;
}

.snapping {
  display: flex;
  align-items: center;
  gap: 5px;
  width: 91px;
}

.snapping input {
  appearance: none;
  width: 18px;
  height: 18px;
  border: 2px solid #969696;
  border-radius: 2px;
}

.workspaces {
  display: flex;
  align-items: center;
  gap: 58px;
  height: 35px;
  margin-left: 37px;
  padding: 0 19px 0 30px;
  border-left: 1px solid #1d1d1d;
  border-right: 1px solid #1d1d1d;
}

.workspaces button {
  display: flex;
  align-items: center;
  gap: 18px;
  white-space: nowrap;
}

.workspaces svg {
  width: 12px;
  height: 12px;
}

.workspaces .current { color: #4d9fec; }
.workspaces .after-menu { margin-left: -30px; }

.workspaces .more {
  margin-left: 12px;
  padding-bottom: 6px;
  font-size: 26px;
}

.help {
  flex: 1;
  height: 25px;
  padding-left: 6px;
  display: flex;
  align-items: center;
  gap: 18px;
  background: #151515;
  border: 1px solid #303030;
}

.help input {
  flex: 1;
  min-width: 0;
}

.help input::placeholder {
  color: #c4c4c4;
}

/* timeline panel */
.panel {
  flex: 1;
  min-height: 0;
  display: flex;
  flex-direction: column;
  margin: 0 1px 3px 3px;
  background: #262626;
  border: 1px solid #3d76c4;
  border-radius: 0 0 6px 6px;
  box-shadow: 0 -1px #111;
}

.tabs {
  flex: none;
  height: 43px;
  display: flex;
  align-items: flex-start;
  gap: 48px;
  padding: 3px 13px;
}

.tab {
  display: flex;
  align-items: center;
  height: 31px;
  border-bottom: 2px solid transparent;
}

.tab.active {
  color: #d0d0d0;
  border-color: #b9b9b9;
}

.tab .x {
  width: 20px;
  text-align: left;
  color: #8a8a8a;
}

.tab svg {
  width: 12px;
  height: 12px;
  margin-left: 8px;
}

.chip {
  width: 14px;
  height: 14px;
  margin-right: 14px;
  background: #a89878;
}

.work {
  flex: 1;
  min-height: 0;
  display: flex;
}

.outline {
  flex: none;
  width: 1393px;
  overflow: hidden;
}

.controls {
  height: 41px;
  display: flex;
  align-items: center;
  padding: 0 14px 7px 13px;
}

.time {
  width: 120px;
  display: flex;
  flex-direction: column;
  color: #2f6fb0;
  font-size: 13px;
  line-height: 17px;
}

.time strong {
  padding-left: 3px;
  font-size: 18px;
  line-height: 21px;
  font-weight: 700;
  color: #4d9fec;
}

.filter {
  flex: 1;
  height: 24px;
  display: flex;
  align-items: center;
  padding-left: 7px;
  background: #151515;
  border-radius: 2px;
  color: #b4b4b4;
}

.filter svg {
  width: 23px;
  height: 18px;
}

.filter input {
  flex: 1;
}

.comp-switches {
  display: flex;
  padding-left: 16px;
}

.comp-switches button {
  width: 35px;
  color: #b4b4b4;
  display: flex;
  justify-content: center;
}

.comp-switches button:first-child { width: 33px; margin-right: 11px; }
.comp-switches button:last-child { margin-left: 10px; }

.comp-switches svg {
  width: 20px;
  height: 20px;
}

/* layer table */
.layers {
  display: block;
}

.layers thead,
.layers tbody {
  display: block;
}

.layers thead {
  padding-bottom: 3px;
}

.row {
  display: grid;
  height: 23px;
  padding-left: 4px;
  border-bottom: 1px solid #202020;
}

.row td,
.row th {
  display: flex;
  align-items: center;
  min-width: 0;
  padding: 0;
  font-weight: 400;
  white-space: nowrap;
}

.head,
.layer {
  grid-template-columns: 20px 20px 20px 20px 50px 43px 274px 183px 67px 28px 126px 155px 94px 93px 94px 80px 1fr;
}

.head {
  height: 28px;
  font-size: 12px;
  border-top: 1px solid #1f1f1f;
  color: #999;
}

.head th {
  position: relative;
  padding-left: 7px;
}

.head th:nth-child(-n + 4) {
  padding-left: 2px;
}

.head svg {
  color: #b8b8b8;
}

.head .sep::before {
  content: "";
  position: absolute;
  left: 0;
  top: 6px;
  width: 1px;
  height: 15px;
  background: #0c0c0c;
}

.head .tagcell { padding-left: 24px; }
.head .mattecell { padding-left: 4px; gap: 5px; }
.head .mattecell svg { width: 15px; height: 15px; }
.head .mattecell svg:first-of-type { margin-left: 11px; }

.row .switches {
  padding-left: 4px;
}

.switches > span {
  width: 18px;
  height: 18px;
  margin: 0 1px;
  display: flex;
  align-items: center;
  justify-content: center;
}

.fx {
  font-family: "Noto Sans", sans-serif;
  font-size: 16px;
  line-height: 16px;
  color: #b8b8b8;
}

.box {
  display: flex;
  align-items: center;
  justify-content: center;
  width: 18px;
  height: 18px;
  margin: 0 1px;
  background: #212121;
  color: #bcbcbc;
}

.row.layer {
  height: 22px;
  background: #2e2e2e;
}

.label {
  gap: 4px;
}

.twirl {
  width: 12px;
  height: 12px;
}

.label .twirl { margin-left: 13px; }

.swatch {
  width: 16px;
  height: 16px;
}

.swatch.tan { background: #a89878; }
.swatch.mint { background: #b5c6b8; }
.swatch.yellow { background: #ded35c; }
.swatch.lilac { background: #aaa8cc; }

.layer .num {
  padding-left: 7px;
  font-weight: 700;
}

.layer .name {
  font-weight: 600;
}

.name svg {
  height: 17px;
  width: 14px;
  margin: 0 9px 0 5px;
}

.name svg.comp {
  width: 22px;
  margin: 0 5px 0 1px;
}

select {
  appearance: none;
  width: 119px;
  height: 20px;
  padding: 0 24px 0 8px;
  color: #c6c6c6;
  background: #1b1b1b url("data:image/svg+xml,%3Csvg xmlns='http://www.w3.org/2000/svg' width='10' height='7'%3E%3Cpath d='M1 1l4 4 4-4' fill='none' stroke='%23aaa' stroke-width='1.500'/%3E%3C/svg%3E") no-repeat right 6px center;
}

select.short {
  width: 60px;
  padding-right: 20px;
  text-overflow: clip;
}

.row td:nth-child(9) select { margin-left: 4px; }
.layer td:nth-child(10) .box { margin-left: 4px; }
.matte .whip { margin-right: 5px; }
.parent .whip { margin: 0 10px 0 5px; }

.layer .val {
  padding-left: 6px;
  color: #4d93d6;
}

.prop {
  grid-template-columns: 20px 20px 20px 387px 424px 1fr;
}

.prop > td:nth-child(-n + 3) {
  justify-content: center;
}

.prop > td:nth-child(-n + 3) svg {
  width: 12px;
  height: 12px;
  color: #b4b4b4;
}

.row.tight,
.lane.tight {
  height: 22px;
}

.pname {
  gap: 7px;
}

.row .pname { padding-left: 77px; }
.row .pname.deep { padding-left: 100px; }

.twirlbox {
  width: 12px;
}

.pname .watch {
  width: 17px;
  height: 19px;
  color: #4386d8;
}

.pname .graph {
  margin: 0 3px 0 0;
}

.row .pval {
  padding-left: 6px;
  gap: 6px;
}

.pval b {
  font-weight: 400;
  color: #4f9fe8;
}

.pval em {
  font-style: normal;
  color: #c94a3f;
}

.pval button {
  color: #4f9fe8;
}

.chain {
  width: 17px;
  height: 11px;
  color: #b4b4b4;
}

.row .pwhip {
  padding-left: 4px;
}

.effect {
  grid-template-columns: 20px 427px 1fr;
}

.effect td:first-child {
  justify-content: center;
}

.row .ename {
  padding-left: 119px;
  gap: 9px;
}

.wavebody {
  height: 91px;
}

.wavebody td {
  padding-left: 183px;
}

/* time graph */
.timeline {
  position: relative;
  flex: 1;
  min-width: 0;
  display: flex;
  flex-direction: column;
  overflow: hidden;
  border-left: 1px solid #050505;
  background: #1e1e1e;
  border-radius: 0 6px 0 0;
}

.navigator {
  height: 14px;
  padding-top: 1px;
}

.nav-range {
  width: 59px;
  height: 12px;
  background: linear-gradient(90deg, #4a8ee6 8px, #050505 8px, #050505 9px, #666 9px, #666 13px, #5288cc 13px, #5288cc 15px, #666 15px, #666 50px, #050505 50px, #050505 51px, #4a8ee6 51px);
  border-radius: 6px;
}

.ruler {
  position: relative;
  height: 26px;
  border-bottom: 1px solid #050505;
}

.tick {
  position: absolute;
  top: 0;
  transform: translateX(-50%);
  height: 25px;
  font-size: 13px;
  line-height: 18px;
}

.tick::after {
  content: "";
  position: absolute;
  left: 50%;
  bottom: 0;
  width: 1px;
  height: 6px;
  background: #999;
}

.workarea {
  position: relative;
  height: 22px;
  border-bottom: 1px solid #050505;
}

.work-range {
  position: absolute;
  height: 21px;
  background: #5f5f5f;
}

.work-range::before,
.work-range::after {
  content: "";
  position: absolute;
  top: 0;
  width: 7px;
  height: 20px;
  background: #4a8ee6;
}

.work-range::before { left: -8px; border-radius: 5px 0 0 5px; }
.work-range::after { right: -8px; border-radius: 0 5px 5px 0; }

.cache {
  position: relative;
  height: 4px;
}

.cached {
  position: absolute;
  height: 4px;
  background: #58b83c;
}

.lanes {
  position: relative;
  flex: 1;
  min-height: 0;
  padding-top: 6px;
  overflow: hidden;
  background: #292929;
}

.comp-range {
  position: absolute;
  top: 0;
  bottom: 0;
  background: #343434;
}

.leftover {
  position: absolute;
  top: 1px;
  height: 2px;
  background: #ccd3c8;
}

.lane {
  position: relative;
  height: 23px;
  border-bottom: 1px solid #222;
}

.layer-lane {
  height: 22px;
  background: rgba(255, 255, 255, 0.05);
}

.lane.closed {
  background: #262626;
}

.bar {
  position: absolute;
  top: 0;
  height: 21px;
  overflow: hidden;
}

.bar.tan { background: #716a5c; }
.bar.mint { background: #7a8279; }
.bar.yellow { background: #8d884d; }
.bar.lilac { background: #72707f; }

.fold::before,
.ends::after {
  content: "";
  position: absolute;
  top: 1px;
  left: 1px;
  border: 3px solid transparent;
  border-top-color: #3a3a36;
  border-left-color: #3a3a36;
}

.ends::after {
  left: auto;
  right: 1px;
  border-left-color: transparent;
  border-right-color: #3a3a36;
}

.layer-marker {
  position: absolute;
  top: 2px;
  height: 17px;
  padding: 0 7px;
  background: #c9c59b;
  border: 1px solid #2a2a20;
  color: #222;
  font-size: 13px;
  line-height: 15px;
}

.layer-marker::before {
  content: "";
  position: absolute;
  left: -8px;
  top: 7px;
  width: 14px;
  height: 11px;
  background: #c8c8c8;
  clip-path: polygon(50% 0, 100% 45%, 100% 100%, 0 100%, 0 45%);
}

.key {
  position: absolute;
  top: 5px;
  width: 12px;
  height: 12px;
  margin-left: -6px;
}

.ibeam {
  position: absolute;
  top: 3px;
  width: 10px;
  height: 16px;
  margin-left: -5px;
}

.wave-lane {
  height: 91px;
}

.wave {
  position: absolute;
  top: 3px;
  display: grid;
  gap: 6px;
}

.wave svg {
  width: 100%;
  height: 40px;
  fill: #ccd6ca;
}

.playhead {
  position: absolute;
  top: 21px;
  bottom: 0;
  width: 2px;
  margin-left: -1px;
  background: #5288cc;
}

.playhead::before {
  content: "";
  position: absolute;
  top: 0;
  left: -6px;
  width: 14px;
  height: 18px;
  background: #4a8ee6;
  clip-path: polygon(0 0, 100% 0, 100% 55%, 50% 100%, 0 55%);
}

.side {
  flex: none;
  width: 21px;
  display: flex;
  flex-direction: column;
  align-items: center;
  background: linear-gradient(#262626 72px, #1c1c1c 72px);
  color: #b4b4b4;
}

.side-marker {
  width: 15px;
  height: 19px;
  margin-top: 43px;
}

.side-comp {
  width: 19px;
  height: 17px;
  margin-top: 9px;
}

.scroll-thumb {
  width: 19px;
  height: 153px;
  margin-top: 443px;
  border-radius: 9px;
  background: #2f2f2f;
}

/* status bar */
.status {
  flex: none;
  height: 22px;
  display: flex;
  align-items: center;
  border-top: 1px solid #0c0c0c;
  padding-left: 6px;
}

.toggles {
  display: flex;
  width: 131px;
  gap: 6px;
}

.toggles button {
  width: 20px;
  display: flex;
  justify-content: center;
  color: #4386d8;
}

.toggles .snail { color: #b4b4b4; }

.ms {
  margin-left: 10px;
  color: #5e5e5e;
}

.zoombar {
  margin-left: auto;
  width: 522px;
  height: 21px;
  display: flex;
  align-items: center;
  padding-left: 9px;
  background: #1d1d1d;
  color: #b4b4b4;
}

.hill {
  width: 13px;
  height: 7px;
}

.zoombar input {
  appearance: none;
  width: 61px;
  height: 14px;
  margin: 0 13px 0 20px;
  background: linear-gradient(#383838, #383838) no-repeat center / 100% 2px;
}

.zoombar input::-webkit-slider-thumb {
  appearance: none;
  width: 13px;
  height: 13px;
  border: 2px solid #909090;
  border-radius: 50%;
  background: #1d1d1d;
}

.hills {
  width: 22px;
  height: 12px;
}

.hscroll {
  width: 33px;
  height: 19px;
  margin-left: 8px;
  border-radius: 9px;
  background: #2c2e2c;
}

/* watermark over the window */
.watermark {
  position: absolute;
  left: 0;
  right: 0;
  bottom: 0;
  display: flex;
  flex-direction: column;
  align-items: center;
  color: #bdbdbd;
  font-family: "DejaVu Sans", sans-serif;
  font-weight: 700;
  font-size: 72px;
  line-height: 76px;
  pointer-events: none;
}

.watermark span + span {
  font-family: Roboto, sans-serif;
  font-size: 36px;
  line-height: 34px;
  font-weight: 500;
}
```
